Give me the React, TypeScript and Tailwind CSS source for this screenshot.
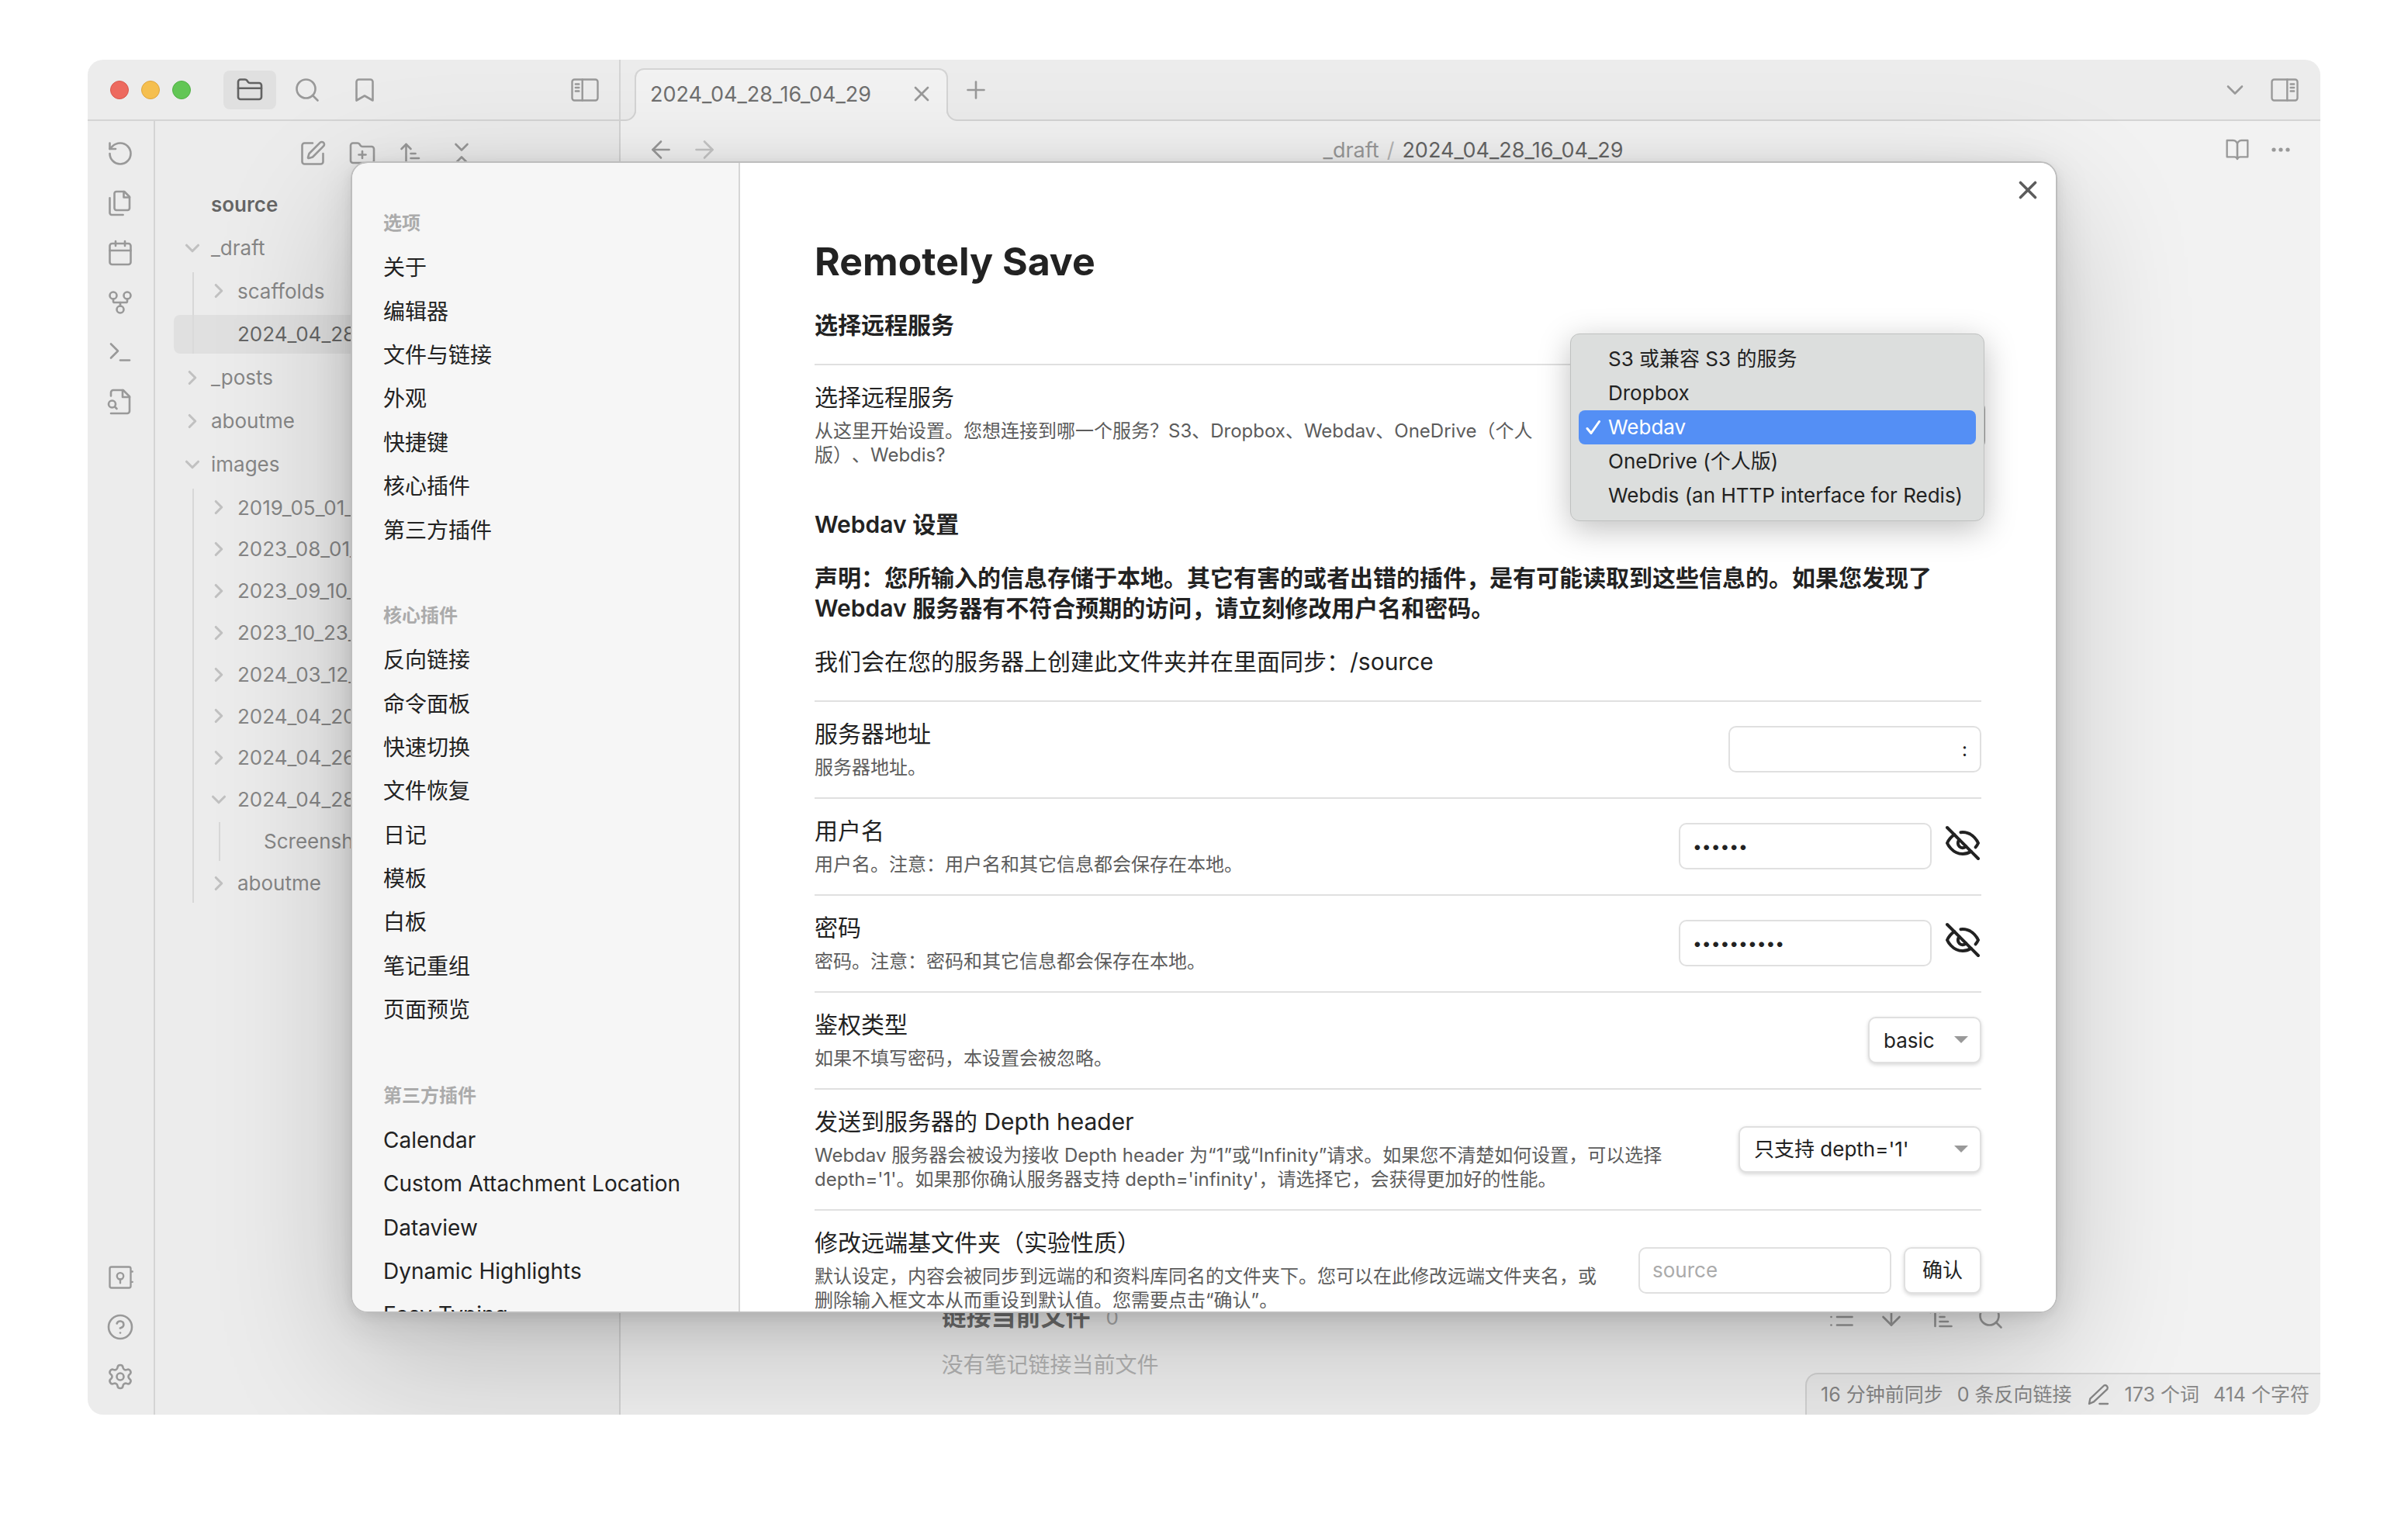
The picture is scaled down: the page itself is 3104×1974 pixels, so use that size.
import React from 'react';
import {
  ArrowDown,
  ArrowLeft,
  ArrowRight,
  ArrowUpNarrowWide,
  Bookmark,
  Calendar,
  ChevronDown,
  ChevronRight,
  ChevronsDownUp,
  CircleHelp,
  FolderPlus,
  GitFork,
  List,
  Plus,
  RotateCcw,
  Search,
  Settings,
  SquarePen,
  X,
} from 'lucide-react';

type IconProps = { className?: string };

function Svg({ className, children, strokeWidth = 1.75 }: IconProps & { children: React.ReactNode; strokeWidth?: number }) {
  return (
    <svg
      viewBox="0 0 24 24"
      fill="none"
      stroke="currentColor"
      strokeWidth={strokeWidth}
      strokeLinecap="round"
      strokeLinejoin="round"
      className={className}
      aria-hidden="true"
    >
      {children}
    </svg>
  );
}

function FolderClosed({ className }: IconProps) {
  return (
    <Svg className={className}>
      <path d="M20 20a2 2 0 0 0 2-2V8a2 2 0 0 0-2-2h-7.9a2 2 0 0 1-1.69-.9L9.6 3.9A2 2 0 0 0 7.93 3H4a2 2 0 0 0-2 2v13a2 2 0 0 0 2 2Z" />
      <path d="M2 10.5h20" />
    </Svg>
  );
}

function SidebarToggle({ className, right }: IconProps & { right?: boolean }) {
  return (
    <Svg className={className} strokeWidth={1.6}>
      <rect x="1" y="3" width="22" height="18" rx="2" />
      <path d={right ? 'M14.2 3v18' : 'M9.8 3v18'} />
      <path d={right ? 'M17.1 7h3M17.1 10h3M17.1 13h3' : 'M3.9 7h3M3.9 10h3M3.9 13h3'} />
    </Svg>
  );
}

function Pages({ className }: IconProps) {
  return (
    <Svg className={className}>
      <path d="M15.5 2H8.6c-.4 0-.8.2-1.1.5-.3.3-.5.7-.5 1.1v12.8c0 .4.2.8.5 1.1.3.3.7.5 1.1.5h9.8c.4 0 .8-.2 1.1-.5.3-.3.5-.7.5-1.1V6.5L15.5 2z" />
      <path d="M3 7.6v12.8c0 .4.2.8.5 1.1.3.3.7.5 1.1.5h9.8" />
      <path d="M15 2v5h5" />
    </Svg>
  );
}

function OpenBook({ className }: IconProps) {
  return (
    <Svg className={className}>
      <path d="M2 3h6a4 4 0 0 1 4 4v14a3 3 0 0 0-3-2H2z" />
      <path d="M22 3h-6a4 4 0 0 0-4 4v14a3 3 0 0 1 3-2h7z" />
    </Svg>
  );
}

function Prompt({ className }: IconProps) {
  return (
    <Svg className={className}>
      <path d="m4 17 6-6-6-6" />
      <path d="M12 19h8" />
    </Svg>
  );
}

function FileLens({ className }: IconProps) {
  return (
    <Svg className={className}>
      <path d="M4 22h14a2 2 0 0 0 2-2V7.5L14.5 2H6a2 2 0 0 0-2 2v3" />
      <path d="M14 2v6h6" />
      <circle cx="5" cy="14" r="3" />
      <path d="m9 18-1.5-1.5" />
    </Svg>
  );
}

function Vault({ className }: IconProps) {
  return (
    <Svg className={className} strokeWidth={1.6}>
      <rect x="3" y="3" width="18" height="18" rx="1.5" />
      <circle cx="12" cy="10.9" r="2.8" />
      <path d="M12 13.7v3.2M21.5 7h1M21.5 15.9h1" />
    </Svg>
  );
}

function Pen({ className }: IconProps) {
  return (
    <Svg className={className}>
      <path d="M13 21h8" />
      <path d="M17.5 3.2a2.5 2.5 0 0 1 3 3.6L7.5 19 3 21l1-5Z" />
    </Svg>
  );
}

function EyeOff({ className }: IconProps) {
  return (
    <Svg className={className} strokeWidth={2}>
      <path d="M9.88 9.88a3 3 0 1 0 4.24 4.24" />
      <path d="M10.73 5.08A10.43 10.43 0 0 1 12 5c7 0 10 7 10 7a13.16 13.16 0 0 1-1.67 2.68" />
      <path d="M6.61 6.61A13.526 13.526 0 0 0 2 12s3 7 10 7a9.74 9.74 0 0 0 5.39-1.61" />
      <path d="m2 2 20 20" />
    </Svg>
  );
}

const icon = 'size-9 shrink-0';

function IconButton({ label, className = '', children }: { label: string; className?: string; children: React.ReactNode }) {
  return (
    <button type="button" aria-label={label} className={`flex items-center justify-center ${className}`}>
      {children}
    </button>
  );
}

/* ---------- background workspace ---------- */

function Ribbon() {
  const cell = 'h-16 w-full';
  return (
    <nav aria-label="功能区" className="flex w-[87px] shrink-0 flex-col border-r-2 border-[#cecece] pt-[10px] pr-px pb-[17px] text-[#6b6b6b]">
      <IconButton label="同步" className={cell}><RotateCcw className={icon} strokeWidth={1.75} /></IconButton>
      <IconButton label="文件" className={cell}><Pages className={icon} /></IconButton>
      <IconButton label="日历" className={cell}><Calendar className={icon} strokeWidth={1.75} /></IconButton>
      <IconButton label="关系图谱" className={cell}><GitFork className={icon} strokeWidth={1.75} /></IconButton>
      <IconButton label="命令面板" className={cell}><Prompt className={icon} /></IconButton>
      <IconButton label="搜索文件" className={cell}><FileLens className={icon} /></IconButton>
      <div className="grow" />
      <IconButton label="打开其他库" className={cell}><Vault className={icon} /></IconButton>
      <IconButton label="帮助" className={cell}><CircleHelp className={icon} strokeWidth={1.75} /></IconButton>
      <IconButton label="设置" className={cell}><Settings className={icon} strokeWidth={1.75} /></IconButton>
    </nav>
  );
}

type RowProps = { name: string; state?: 'open' | 'closed'; active?: boolean };

function TreeRow({ name, state, active }: RowProps) {
  return (
    <button
      type="button"
      className={`flex w-full items-center rounded-lg py-2 pl-[9px] text-left leading-[1.3] whitespace-nowrap ${
        active ? 'text-[#151515]' : 'text-[#4b4b4b]'
      }`}
    >
      <span className="flex w-[39px] shrink-0 items-center">
        {state === 'open' && <ChevronDown className="size-[30px]" color="#adadad" strokeWidth={2.5} />}
        {state === 'closed' && <ChevronRight className="size-[30px]" color="#adadad" strokeWidth={2.5} />}
      </span>
      {name}
    </button>
  );
}

function FileExplorer() {
  const days = ['2019_05_01_', '2023_08_01_', '2023_09_10_', '2023_10_23_', '2024_03_12_', '2024_04_20_', '2024_04_26_'];
  return (
    <div className="flex min-w-0 grow flex-col">
      <div className="flex h-[83px] shrink-0 items-center justify-center text-[#6b6b6b]">
        <IconButton label="新建笔记" className="w-16"><SquarePen className={icon} strokeWidth={1.75} /></IconButton>
        <IconButton label="新建文件夹" className="w-16"><FolderPlus className={icon} strokeWidth={1.75} /></IconButton>
        <IconButton label="排序" className="w-16"><ArrowUpNarrowWide className={icon} strokeWidth={1.75} /></IconButton>
        <IconButton label="全部折叠" className="w-16"><ChevronsDownUp className={icon} strokeWidth={1.75} /></IconButton>
      </div>
      <div className="flex flex-col gap-[6px] px-6 text-[26px]">
        <h2 className="py-2 pl-12 leading-[1.3] font-semibold text-[#151515]">source</h2>
        <TreeRow name="_draft" state="open" />
        <div className="ml-6 flex flex-col gap-[6px] border-l-2 border-[#d4d4d4] pl-2">
          <TreeRow name="scaffolds" state="closed" />
          <div className="-ml-[34px] rounded-lg bg-[#dadada]/70 pl-[34px]">
            <TreeRow name="2024_04_28_16_04_29" active />
          </div>
        </div>
        <TreeRow name="_posts" state="closed" />
        <TreeRow name="aboutme" state="closed" />
        <TreeRow name="images" state="open" />
        <div className="ml-6 flex flex-col gap-1 border-l-2 border-[#d4d4d4] pl-2">
          {days.map((d) => (
            <TreeRow key={d} name={d} state="closed" />
          ))}
          <TreeRow name="2024_04_28_" state="open" />
          <div className="ml-6 border-l-2 border-[#d4d4d4] pl-2">
            <TreeRow name="Screenshot" />
          </div>
          <TreeRow name="aboutme" state="closed" />
        </div>
      </div>
    </div>
  );
}

function LeftSide() {
  return (
    <div className="flex w-[687px] shrink-0 flex-col border-r-2 border-[#cecece] bg-[#f6f6f6]">
      <div className="flex h-[79px] shrink-0 items-center border-b-2 border-[#cecece] pr-[26px] pl-7 text-[#6b6b6b]">
        <div className="relative z-20 flex gap-4 pl-px">
          <button type="button" aria-label="关闭" className="size-6 rounded-full border border-[#d8574c] bg-[#ed6a5f]" />
          <button type="button" aria-label="最小化" className="size-6 rounded-full border border-[#dfa53c] bg-[#f5bf4f]" />
          <button type="button" aria-label="缩放" className="size-6 rounded-full border border-[#51b045] bg-[#62c655]" />
        </div>
        <div className="ml-[42px] flex gap-[6px]">
          <IconButton label="文件列表" className="h-[50px] w-[68px] rounded-lg bg-[#e2e2e2] text-[#0f0f0f]"><FolderClosed className={icon} /></IconButton>
          <IconButton label="搜索" className="h-[50px] w-[68px]"><Search className={icon} strokeWidth={1.75} /></IconButton>
          <IconButton label="书签" className="h-[50px] w-[68px]"><Bookmark className={icon} strokeWidth={1.75} /></IconButton>
        </div>
        <div className="grow" />
        <IconButton label="收起左侧边栏"><SidebarToggle className={icon} /></IconButton>
      </div>
      <div className="flex min-h-0 grow">
        <Ribbon />
        <FileExplorer />
      </div>
    </div>
  );
}

function TabBar() {
  return (
    <div className="flex h-[79px] shrink-0 items-center border-b-2 border-[#cecece] bg-[#f6f6f6] pr-7 pl-[18px] text-[#6b6b6b]">
      <div className="relative -mb-[2px] flex h-[68px] w-[404px] items-center self-end rounded-t-xl border-2 border-b-0 border-[#cecece] bg-white pr-4 pb-1 pl-[18px]">
        <svg viewBox="0 0 14 14" className="absolute bottom-0 -left-[14px] size-[14px]" aria-hidden="true">
          <path d="M14 0a13 13 0 0 1-13 13v1h13Z" fill="#ffffff" />
          <path d="M13 0a13 13 0 0 1-13 13" fill="none" stroke="#cecece" strokeWidth="2" />
        </svg>
        <svg viewBox="0 0 14 14" className="absolute -right-[14px] bottom-0 size-[14px]" aria-hidden="true">
          <path d="M0 0a13 13 0 0 0 13 13v1H0Z" fill="#ffffff" />
          <path d="M1 0a13 13 0 0 0 13 13" fill="none" stroke="#cecece" strokeWidth="2" />
        </svg>
        <span className="grow text-[27px] leading-none text-[#262626]">2024_04_28_16_04_29</span>
        <IconButton label="关闭标签页"><X className="size-8" strokeWidth={2} /></IconButton>
      </div>
      <IconButton label="新标签页" className="ml-[18px]"><Plus className={icon} strokeWidth={1.75} /></IconButton>
      <div className="grow" />
      <IconButton label="标签页列表"><ChevronDown className={icon} strokeWidth={1.75} /></IconButton>
      <IconButton label="展开右侧边栏" className="ml-7"><SidebarToggle className={icon} right /></IconButton>
    </div>
  );
}

function Workspace() {
  return (
    <div className="relative flex min-w-0 grow flex-col bg-white text-[#6b6b6b]">
      <TabBar />
      <div className="flex h-[74px] shrink-0 items-center pr-[33px] pl-[34px]">
        <IconButton label="后退"><ArrowLeft className={icon} strokeWidth={1.75} /></IconButton>
        <IconButton label="前进" className="ml-5 text-[#b5b5b5]"><ArrowRight className={icon} strokeWidth={1.75} /></IconButton>
        <div className="flex grow justify-center gap-[10px] pl-1 text-[27px] leading-none">
          <span>_draft</span>
          <span className="text-[#9a9a9a]">/</span>
          <span className="text-[#151515]">2024_04_28_16_04_29</span>
        </div>
        <IconButton label="阅读视图"><OpenBook className="size-8" /></IconButton>
        <IconButton label="更多选项" className="ml-[22px]">
          <svg viewBox="0 0 36 36" className="size-9" fill="currentColor" aria-hidden="true">
            <circle cx="9" cy="18" r="2.6" />
            <circle cx="18" cy="18" r="2.6" />
            <circle cx="27" cy="18" r="2.6" />
          </svg>
        </IconButton>
      </div>
      <div className="grow" />
      <div className="mx-auto flex w-full max-w-[1400px] flex-col gap-6 pb-[46px] pl-[18px]">
        <div className="flex items-center">
          <h3 className="text-[32px] leading-10 font-semibold text-[#262626]">链接当前文件</h3>
          <span className="ml-5 text-[26px] text-[#8b8b8b]">0</span>
          <div className="mr-3 ml-auto flex gap-7">
            <IconButton label="折叠结果"><List className={icon} strokeWidth={1.75} /></IconButton>
            <IconButton label="显示上下文"><ArrowDown className={icon} strokeWidth={1.75} /></IconButton>
            <IconButton label="更改排序"><ArrowUpNarrowWide className={icon} strokeWidth={1.75} /></IconButton>
            <IconButton label="显示搜索"><Search className={icon} strokeWidth={1.75} /></IconButton>
          </div>
        </div>
        <p className="text-[28px] leading-9 text-[#9a9a9a]">没有笔记链接当前文件</p>
      </div>
      <footer className="absolute right-0 bottom-0 flex h-[54px] items-center gap-[18px] rounded-tl-2xl border-t-2 border-l-2 border-[#cecece] bg-[#f6f6f6] pr-[14px] pl-[18px] text-[25px] leading-none text-[#4b4b4b]">
        <span>16 分钟前同步</span>
        <span>0 条反向链接</span>
        <Pen className="size-8" />
        <span>173 个词</span>
        <span>414 个字符</span>
      </footer>
    </div>
  );
}

/* ---------- settings dialog ---------- */

const groups = [
  { title: '选项', items: ['关于', '编辑器', '文件与链接', '外观', '快捷键', '核心插件', '第三方插件'] },
  { title: '核心插件', items: ['反向链接', '命令面板', '快速切换', '文件恢复', '日记', '模板', '白板', '笔记重组', '页面预览'] },
  { title: '第三方插件', items: ['Calendar', 'Custom Attachment Location', 'Dataview', 'Dynamic Highlights', 'Easy Typing'] },
];

function SettingsNav() {
  return (
    <nav aria-label="设置" className="flex w-[500px] shrink-0 flex-col gap-[66px] overflow-hidden border-r-2 border-[#d6d6d6] bg-[#f6f6f6] pt-[62px]">
      {groups.map((g) => (
        <div key={g.title} className="shrink-0 px-10">
          <h3 className="mb-[14px] text-[24px] leading-[1.3] font-semibold text-[#ababab]">{g.title}</h3>
          {g.items.map((item) => (
            <button key={item} type="button" className="block w-full py-[10px] text-left text-[28px] leading-[1.3] whitespace-nowrap text-[#222222]">
              {item}
            </button>
          ))}
        </div>
      ))}
    </nav>
  );
}

function Item({ id, name, desc, gap = 'gap-8', children }: { id: string; name: string; desc: React.ReactNode; gap?: string; children: React.ReactNode }) {
  return (
    <div className={`flex items-center border-t-2 border-[#e0e0e0] pt-[22px] pb-[23px] ${gap}`}>
      <div className="min-w-0 grow">
        <label htmlFor={id} className="block text-[30px] leading-[39px]">{name}</label>
        <p className="pt-2 text-[24px] leading-[31px] text-[#5c5c5c]">{desc}</p>
      </div>
      <div className="flex shrink-0 items-center gap-4">{children}</div>
    </div>
  );
}

const field = 'h-[60px] w-[326px] rounded-[10px] border-2 border-[#e0e0e0] bg-white px-4 text-[#222222] placeholder:text-[#ababab]';

function Dropdown({ id, options, width, focused }: { id: string; options: string[]; width: string; focused?: boolean }) {
  return (
    <div className={`relative ${width}`}>
      <select
        id={id}
        defaultValue={options[0]}
        className={`h-[60px] w-full appearance-none rounded-[10px] border-2 border-[#e0e0e0] bg-white pr-12 pl-[18px] text-[26px] text-[#222222] ${
          focused ? 'shadow-[0_0_0_5px_#9a9a9a]' : 'shadow-[0_2px_5px_rgba(0,0,0,0.16)]'
        }`}
      >
        {options.map((o) => (
          <option key={o}>{o}</option>
        ))}
      </select>
      <svg viewBox="0 0 18 9" className="pointer-events-none absolute top-[25px] right-[17px] h-[9px] w-[18px]" aria-hidden="true">
        <path d="M0 0h18l-9 9Z" fill="#999999" />
      </svg>
    </div>
  );
}

function ServiceMenu() {
  const services = ['S3 或兼容 S3 的服务', 'Dropbox', 'Webdav', 'OneDrive (个人版)', 'Webdis (an HTTP interface for Redis)'];
  return (
    <ul
      role="listbox"
      aria-label="选择远程服务"
      className="absolute -top-[88px] -right-[4px] z-10 w-[534px] rounded-xl border border-[#bfc1c0] bg-[#dcdedd] p-[10px] text-[26px] shadow-[0_10px_40px_rgba(0,0,0,0.25)]"
    >
      {services.map((s) => {
        const on = s === 'Webdav';
        return (
          <li
            key={s}
            role="option"
            aria-selected={on}
            className={`flex h-11 items-center rounded-lg whitespace-nowrap ${on ? 'bg-[#548ff5] text-white' : 'text-[#222222]'}`}
          >
            <span className="flex w-[38px] justify-center">
              {on && (
                <svg viewBox="0 0 20 20" className="size-5" fill="none" stroke="currentColor" strokeWidth="3" strokeLinecap="round" strokeLinejoin="round" aria-hidden="true">
                  <path d="m2 11.5 5 6L17.5 2.5" />
                </svg>
              )}
            </span>
            {s}
          </li>
        );
      })}
    </ul>
  );
}

function SettingsBody() {
  return (
    <div className="min-w-0 grow overflow-hidden bg-white px-24 pt-24 text-[#222222] [text-spacing-trim:space-all]">
      <h1 className="text-[50px] leading-[62px] font-bold">Remotely Save</h1>
      <h2 className="mt-8 mb-[30px] text-[30px] leading-[39px] font-semibold">选择远程服务</h2>
      <Item id="service" name="选择远程服务" desc="从这里开始设置。您想连接到哪一个服务？S3、Dropbox、Webdav、OneDrive（个人版）、Webdis?">
        <div className="relative">
          <Dropdown id="service" options={['Webdav']} width="w-[520px]" focused />
          <ServiceMenu />
        </div>
      </Item>
      <h2 className="mt-8 text-[30px] leading-[39px] font-semibold">Webdav 设置</h2>
      <p className="mt-[30px] text-[30px] leading-[39px] font-semibold">
        声明：您所输入的信息存储于本地。其它有害的或者出错的插件，是有可能读取到这些信息的。如果您发现了 Webdav 服务器有不符合预期的访问，请立刻修改用户名和密码。
      </p>
      <p className="my-[30px] text-[30px] leading-[39px]">我们会在您的服务器上创建此文件夹并在里面同步：/source</p>
      <Item id="address" name="服务器地址" desc="服务器地址。">
        <input id="address" defaultValue=":" className={`${field} text-right text-[24px]`} />
      </Item>
      <Item id="user" name="用户名" desc="用户名。注意：用户名和其它信息都会保存在本地。">
        <input id="user" type="password" defaultValue="abcdef" className={`${field} text-[21px]`} />
        <button type="button" aria-label="显示用户名" className="mb-2"><EyeOff className="size-12" /></button>
      </Item>
      <Item id="password" name="密码" desc="密码。注意：密码和其它信息都会保存在本地。">
        <input id="password" type="password" defaultValue="abcdefghij" className={`${field} text-[21px]`} />
        <button type="button" aria-label="显示密码" className="mb-2"><EyeOff className="size-12" /></button>
      </Item>
      <Item id="auth" name="鉴权类型" desc="如果不填写密码，本设置会被忽略。">
        <Dropdown id="auth" options={['basic', 'digest']} width="w-[146px]" />
      </Item>
      <Item
        id="depth"
        name="发送到服务器的 Depth header"
        gap="gap-[72px]"
        desc="Webdav 服务器会被设为接收 Depth header 为“1”或“Infinity”请求。如果您不清楚如何设置，可以选择 depth='1'。如果那你确认服务器支持 depth='infinity'，请选择它，会获得更加好的性能。"
      >
        <Dropdown id="depth" options={["只支持 depth='1'", "支持 depth='infinity'"]} width="w-[313px]" />
      </Item>
      <Item
        id="base"
        name="修改远端基文件夹（实验性质）"
        gap="gap-12"
        desc="默认设定，内容会被同步到远端的和资料库同名的文件夹下。您可以在此修改远端文件夹名，或删除输入框文本从而重设到默认值。您需要点击“确认”。"
      >
        <input id="base" placeholder="source" className={`${field} text-[26px]`} />
        <button type="button" className="h-[60px] w-[100px] rounded-[10px] border-2 border-[#e0e0e0] bg-white text-[26px] shadow-[0_2px_5px_rgba(0,0,0,0.16)]">
          确认
        </button>
      </Item>
    </div>
  );
}

export default function App() {
  return (
    <div
      lang="zh-CN"
      className="flex h-screen w-full bg-white px-[113px] pt-[77px] pb-[150px] font-['Inter','Noto_Sans_CJK_SC',sans-serif]"
    >
      <div className="relative flex min-w-0 grow overflow-hidden rounded-[20px]">
        <LeftSide />
        <Workspace />
        <div className="absolute inset-0 z-10 flex items-center justify-center bg-[#dfdfdf]/40">
          <div
            role="dialog"
            aria-label="设置"
            className="relative flex h-[85%] w-[90%] max-w-[2200px] overflow-hidden rounded-[22px] border-2 border-[#bdbdbd] shadow-[0_4px_14px_rgba(0,0,0,0.07),0_12px_50px_rgba(0,0,0,0.11),0_60px_180px_rgba(0,0,0,0.2)]"
          >
            <SettingsNav />
            <SettingsBody />
            <button type="button" aria-label="关闭设置" className="absolute top-4 right-[17px] text-[#5c5c5c]">
              <X className="size-[38px]" strokeWidth={2.25} />
            </button>
          </div>
        </div>
      </div>
    </div>
  );
}
